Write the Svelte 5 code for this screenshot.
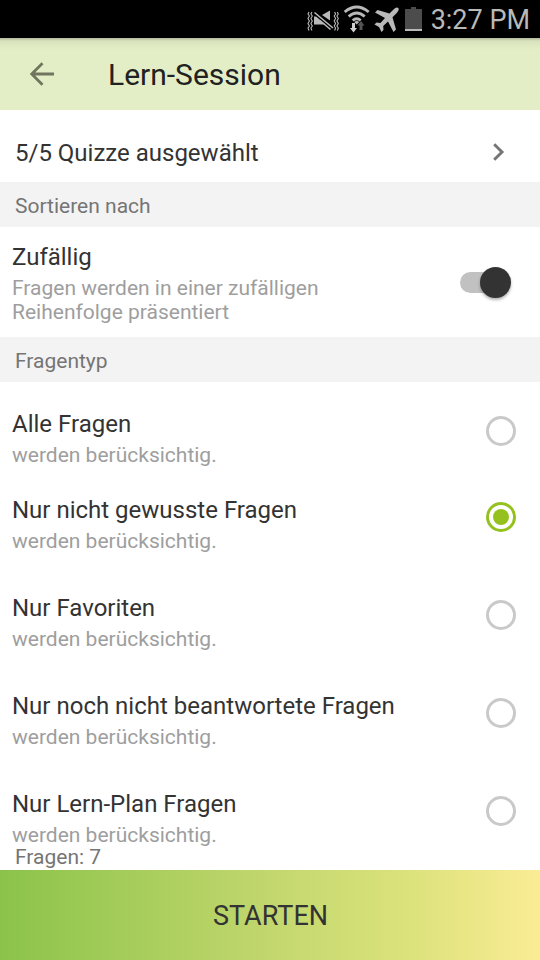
<script>
  let random = true;
  let selected = 1;
  let questionCount = 7;

  let questionTypes = [
    "Alle Fragen",
    "Nur nicht gewusste Fragen",
    "Nur Favoriten",
    "Nur noch nicht beantwortete Fragen",
    "Nur Lern-Plan Fragen",
  ];

  function toggleRandom() {
    random = !random;
  }
</script>

<div class="screen">
  <div class="status-bar">
    <svg class="vibrate" width="32" height="22" viewBox="0 0 32 22">
      <g fill="none" stroke="#b9b9b9" stroke-width="1.1">
        <path d="M2 2 L1 4 L2.400 6 L1 8.500 L2.400 11 L1 13.500 L2.400 16 L1 18 L2 20.500" />
        <path d="M4.900 2 L3.900 4 L5.300 6 L3.900 8.500 L5.300 11 L3.900 13.500 L5.300 16 L3.900 18 L4.900 20.500" />
        <path d="M27.600 2 L28.600 4 L27.200 6 L28.600 8.500 L27.200 11 L28.600 13.500 L27.200 16 L28.600 18 L27.600 20.500" />
        <path d="M30.300 2 L31.300 4 L29.900 6 L31.300 8.500 L29.900 11 L31.300 13.500 L29.900 16 L31.300 18 L30.300 20.500" />
      </g>
      <path d="M7 6.500 L9.500 6.500 L18.500 14.500 L7 14.500 Z M15 5 L23 0.500 L23 10.500 Z" fill="#b9b9b9" />
      <path d="M7.500 2.500 L26 18" stroke="#000" stroke-width="4" />
      <path d="M7.500 2.500 L26 18 M13 10.500 L23.500 19.500" stroke="#b9b9b9" stroke-width="1.600" />
    </svg>
    <svg class="wifi" width="28" height="28" viewBox="0 0 28 28">
      <g fill="none" stroke="#b9b9b9" stroke-width="2.900">
        <path d="M0.700 7 Q12.700 -2.800 24.700 7" />
        <path d="M4.700 11.500 Q12.700 4.500 20.700 11.500" />
        <path d="M8.700 15.500 Q12.700 12 16.700 15.500" />
      </g>
      <path d="M10.200 17 Q12.700 15 15.200 17 L12.700 19.500 Z" fill="#b9b9b9" />
      <path d="M8 18 H11 V23 H13 L9.500 27.500 L6 23 H8 Z" fill="#d0d0d0" />
      <path d="M17 16 L20.500 20.500 H18.500 V25 H15.500 V20.500 H13.500 Z" fill="#555" />
    </svg>
    <svg class="plane" width="26" height="26" viewBox="0 0 26 26">
      <path
        d="M24.500 1.200 Q22.500 -0.500 19.500 2.500 L15.500 6.500 L3.500 3 L1 5.500 L11 11 L6.500 16 L2.500 15.500 L0.500 17.500 L5 20 L7.500 25 L9.500 23 L9.200 19 L14 14.500 L19.500 25 L22 22.500 L18.500 10.300 L22.500 6.300 Q25.500 3 24.500 1.200 Z"
        fill="#b9b9b9"
      />
    </svg>
    <svg class="battery" width="17" height="24" viewBox="0 0 17 24">
      <path d="M6 0 H11 V2 H17 V22 H0 V2 H6 Z" fill="#4c4c4c" />
      <path d="M0 22 H17 V24 H0 Z" fill="#b9b9b9" />
    </svg>
    <span class="clock">3:27 PM</span>
  </div>

  <header>
    <button class="back" aria-label="Zurück">
      <svg width="24" height="24" viewBox="0 0 24 24">
        <path d="M24 12 H2 M12.500 1.200 L1.700 12 L12.500 22.800" fill="none" stroke="#6f755f" stroke-width="2.800" />
      </svg>
    </button>
    <h1>Lern-Session</h1>
  </header>

  <div class="quizzes">
    <span>5/5 Quizze ausgewählt</span>
    <svg width="12" height="18" viewBox="0 0 12 18">
      <path d="M1.200 1.200 L9 9 L1.200 16.800" fill="none" stroke="#757575" stroke-width="2.900" />
    </svg>
  </div>

  <h2>Sortieren nach</h2>

  <div class="sort">
    <div class="text">
      <div class="title">Zufällig</div>
      <div class="subtitle">Fragen werden in einer zufälligen Reihenfolge präsentiert</div>
    </div>
    <button class="switch" class:on={random} role="switch" aria-checked={random} aria-label="Zufällig" on:click={toggleRandom}>
      <span class="thumb"></span>
    </button>
  </div>

  <h2>Fragentyp</h2>

  <div class="types">
    {#each questionTypes as type, i}
      <button class="type" role="radio" aria-checked={selected === i} on:click={() => (selected = i)}>
        <span class="text">
          <span class="title">{type}</span>
          <span class="subtitle">werden berücksichtig.</span>
        </span>
        <span class="radio" class:checked={selected === i}></span>
      </button>
    {/each}
  </div>

  <div class="count">Fragen: {questionCount}</div>
  <button class="start">STARTEN</button>
</div>

<style>
  :global(body) {
    background: #fff;
  }

  .screen {
    display: flex;
    flex-direction: column;
    width: 540px;
    height: 960px;
    overflow: hidden;
    background: #fff;
    color: #333;
    font-family: Roboto, sans-serif;
  }

  button {
    border: none;
    padding: 0;
    background: none;
    color: inherit;
    font-family: inherit;
    cursor: pointer;
  }

  svg {
    display: block;
    flex: none;
  }

  .status-bar {
    display: flex;
    flex: none;
    align-items: flex-start;
    justify-content: flex-end;
    height: 38px;
    padding-right: 10px;
    box-sizing: border-box;
    background: #000;
  }

  .vibrate {
    margin: 10px 5px 0 0;
  }

  .wifi {
    margin: 5px 2px 0 0;
  }

  .plane {
    margin: 7px 5px 0 0;
  }

  .battery {
    margin: 7px 9px 0 0;
  }

  .clock {
    margin-top: 4px;
    color: #b9b9b9;
    font-size: 27px;
    line-height: 32px;
  }

  header {
    display: flex;
    flex: none;
    align-items: center;
    height: 72px;
    padding-left: 30px;
    box-sizing: border-box;
    background: linear-gradient(rgba(0, 0, 0, 0.22), rgba(0, 0, 0, 0.05) 3px, rgba(0, 0, 0, 0) 12px), #e4eec6;
  }

  .back {
    width: 24px;
    height: 24px;
    margin-right: 54px;
  }

  h1 {
    margin: 0;
    padding-top: 2px;
    color: #212121;
    font-size: 30px;
    font-weight: 400;
    line-height: 36px;
  }

  .quizzes {
    display: flex;
    flex: none;
    align-items: center;
    justify-content: space-between;
    height: 72px;
    padding: 13px 35px 0 15px;
    box-sizing: border-box;
    font-size: 24px;
    line-height: 28px;
  }

  .quizzes svg {
    margin-bottom: 2px;
  }

  h2 {
    flex: none;
    height: 45px;
    margin: 0;
    padding: 12px 15px 0;
    box-sizing: border-box;
    background: #f3f3f3;
    color: #757575;
    font-size: 21px;
    font-weight: 400;
    line-height: 24px;
  }

  .sort {
    display: flex;
    flex: none;
    justify-content: space-between;
    height: 110px;
    padding: 16px 29px 0 12px;
    box-sizing: border-box;
  }

  .sort .text {
    width: 340px;
  }

  .title {
    display: block;
    margin-bottom: 5px;
    font-size: 24px;
    line-height: 28px;
  }

  .subtitle {
    display: block;
    color: #9e9e9e;
    font-size: 21px;
    line-height: 24px;
  }

  .switch {
    display: flex;
    align-items: center;
    width: 51px;
    height: 21px;
    margin-top: 29px;
    border-radius: 11px;
    background: #c1c1c1;
  }

  .switch.on {
    justify-content: flex-end;
  }

  .thumb {
    width: 31px;
    height: 31px;
    border-radius: 50%;
    background: #333;
    box-shadow: 0 2px 3px rgba(0, 0, 0, 0.3);
  }

  .types {
    flex: 1;
    min-height: 0;
    padding-top: 28px;
    overflow: hidden;
  }

  .type {
    display: flex;
    justify-content: space-between;
    width: 100%;
    height: 98px;
    padding: 0 24px 0 12px;
    text-align: left;
  }

  .type:first-child {
    height: 86px;
  }

  .radio {
    display: flex;
    align-items: center;
    justify-content: center;
    width: 30px;
    height: 30px;
    margin-top: 6px;
    border: 3px solid #c9c9c9;
    border-radius: 50%;
    box-sizing: border-box;
  }

  .radio.checked {
    border-color: #95c11f;
  }

  .radio.checked::after {
    content: "";
    width: 16px;
    height: 16px;
    border-radius: 50%;
    background: #95c11f;
  }

  .count {
    flex: none;
    height: 24px;
    padding-left: 15px;
    color: #757575;
    font-size: 21px;
    line-height: 22px;
  }

  .start {
    flex: none;
    height: 90px;
    padding: 1px 0 0 1px;
    background: linear-gradient(90deg, #8bc34a, #c0d66c 48%, #dce27c 76%, #fbec94);
    font-size: 27px;
  }
</style>
